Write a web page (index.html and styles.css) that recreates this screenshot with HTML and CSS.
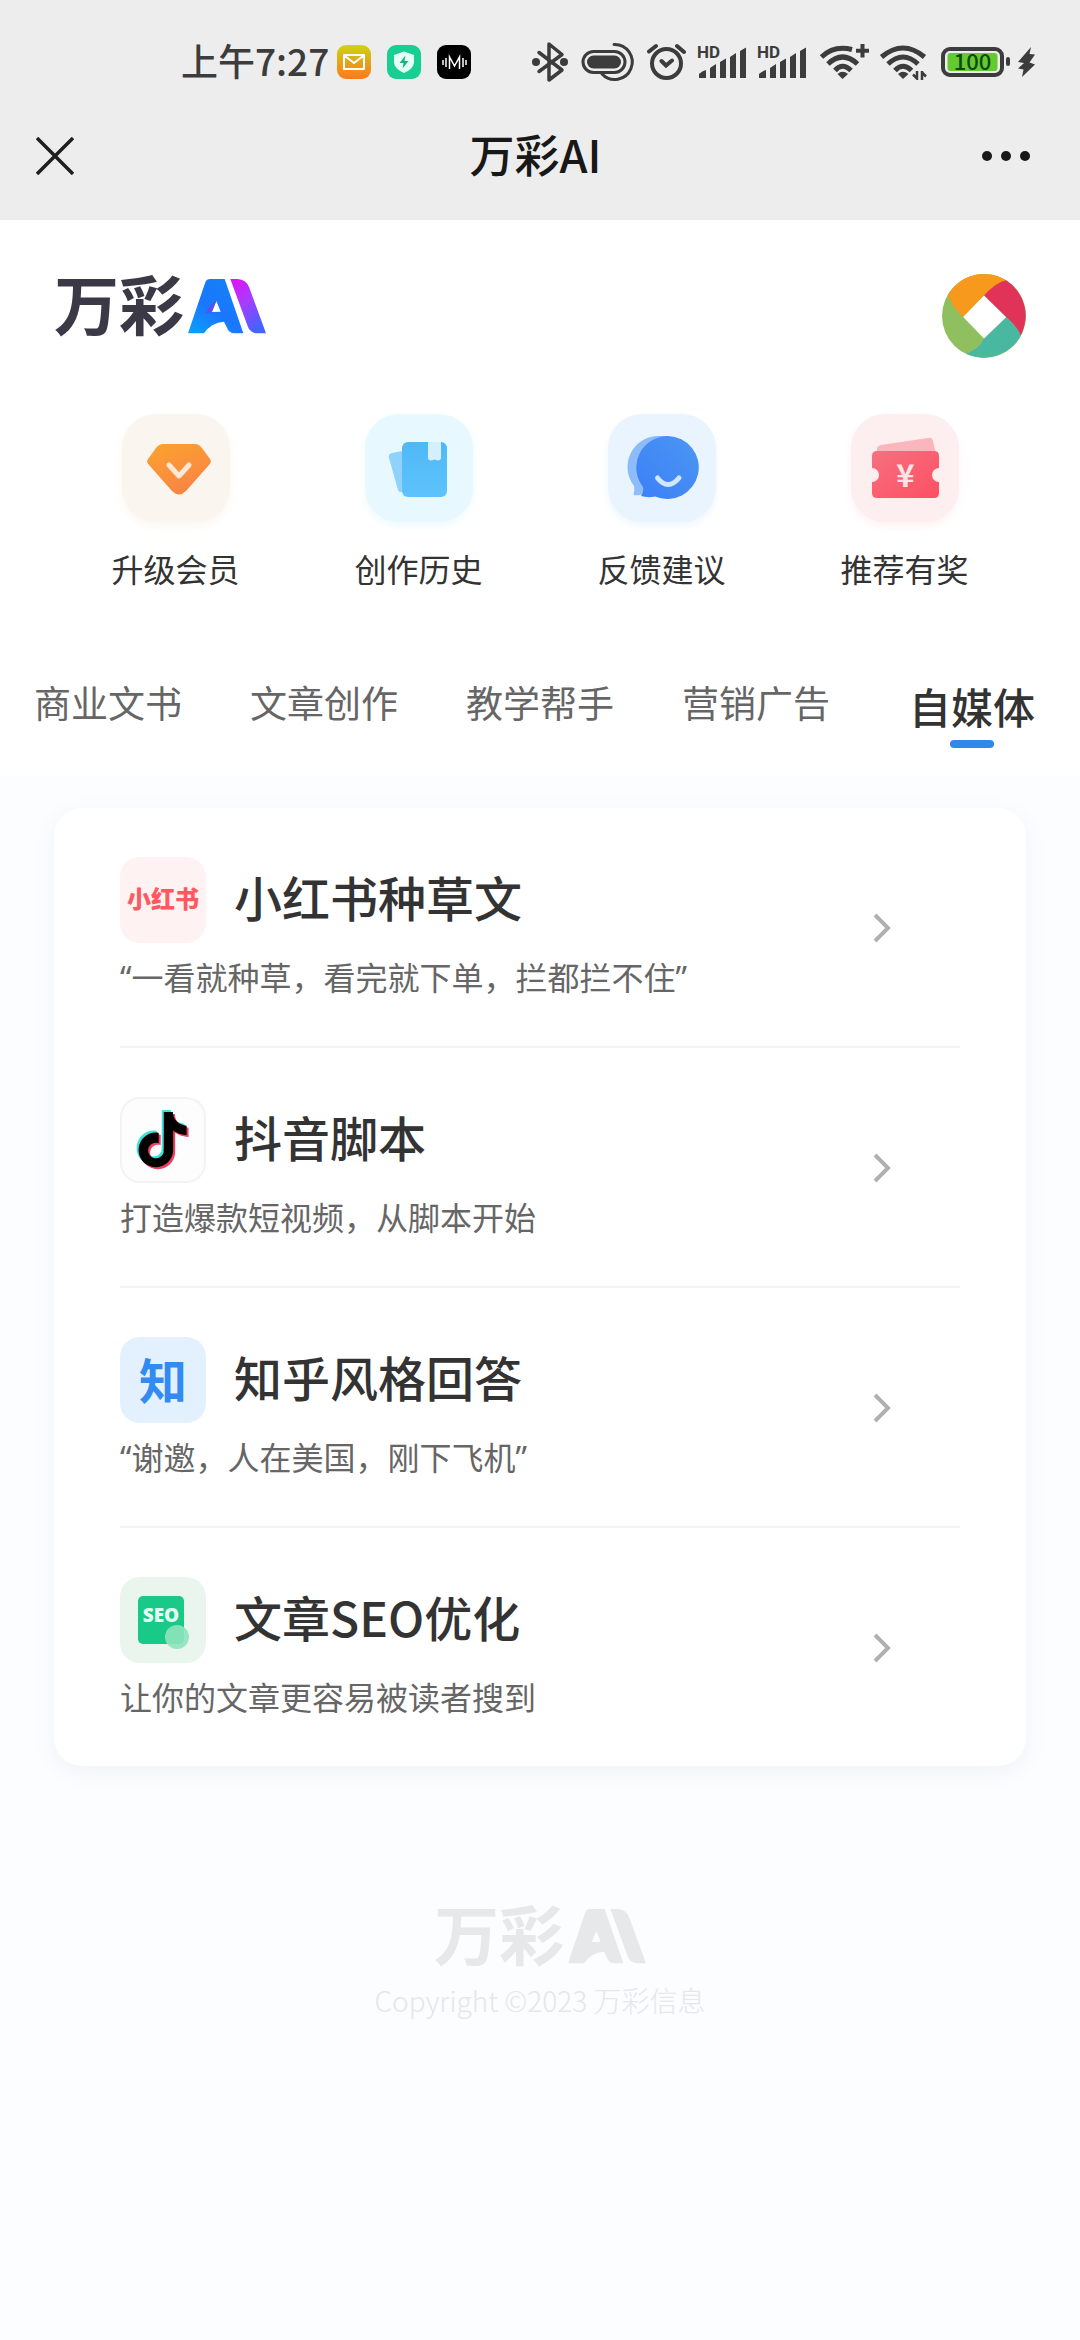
FILE: index.html
```html
<!DOCTYPE html>
<html lang="zh-CN">
<head>
<meta charset="utf-8">
<meta name="viewport" content="width=device-width, initial-scale=1">
<title>万彩AI</title>
<link rel="stylesheet" href="styles.css">
</head>
<body>
<div class="topbar">
  <div class="status">
    <div class="status-group status-left">
      <span class="clock">上午7:27</span>
      <svg class="app-badge" viewBox="0 0 34 34" aria-hidden="true">
        <defs><linearGradient id="mail" x1="0" y1="0" x2="0" y2="1"><stop offset="0" stop-color="#cdd60a"/><stop offset=".5" stop-color="#e3a51c"/><stop offset="1" stop-color="#ff7a1a"/></linearGradient></defs>
        <rect width="34" height="34" rx="9" fill="url(#mail)"/>
        <path d="M7 10H27V24H7ZM8 11L17 18L26 11" fill="none" stroke="#fff" stroke-width="2" stroke-linejoin="round"/>
      </svg>
      <svg class="app-badge" viewBox="0 0 34 34" aria-hidden="true">
        <rect width="34" height="34" rx="9" fill="#18cf93"/>
        <path d="M17 6.5L27 10V18Q26 24 17 28Q8 24 7 18V10Z" fill="#e6fff5"/>
        <path d="M18.5 10.500L12.500 18H16.500L15.500 23.500L21.500 16H17.500Z" fill="#18b283"/>
      </svg>
      <svg class="app-badge" viewBox="0 0 34 34" aria-hidden="true">
        <rect width="34" height="34" rx="9" fill="#000"/>
        <path d="M6 15V20M9 13V22M12.500 24V12L17.500 21L22.500 12V24M26 13V22M29 15V20" fill="none" stroke="#fff" stroke-width="1.500"/>
      </svg>
    </div>
    <div class="status-group status-right">
      <svg width="40" height="44" viewBox="0 0 40 44" aria-hidden="true">
        <path d="M8 12.500L31 30L18 40V4L31 14.500L8 31.500" fill="none" stroke="#3c3c3c" stroke-width="3.500" stroke-linecap="round" stroke-linejoin="round"/>
        <circle cx="5" cy="22" r="4" fill="#3c3c3c"/><circle cx="33" cy="22" r="4" fill="#3c3c3c"/>
      </svg>
      <svg width="56" height="44" viewBox="0 0 56 44" aria-hidden="true">
        <rect x="2" y="11.500" width="42" height="21" rx="10.500" fill="none" stroke="#3c3c3c" stroke-width="3"/>
        <rect x="6" y="15.500" width="34" height="13" rx="6.500" fill="#3c3c3c"/>
        <path d="M33 4.500A17.500 17.500 0 1 1 21 34" fill="none" stroke="#3c3c3c" stroke-width="3" stroke-linecap="round"/>
      </svg>
      <svg width="40" height="44" viewBox="0 0 40 44" fill="none" stroke="#3c3c3c" stroke-width="4" stroke-linecap="round" aria-hidden="true">
        <circle cx="19.500" cy="23.500" r="14.500"/>
        <path d="M14.500 21L19 25.500L25 20.500M2 11.500L9 6M30 6L37 12"/>
      </svg>
      <svg class="signal" width="50" height="44" viewBox="0 0 50 44" aria-hidden="true">
        <text x="0" y="18">HD</text>
        <path d="M2 34Q5 31 9 30V38H2ZM13 28L19 24V38H13ZM23 22L29 18.500V38H23ZM33 17L39 13V38H33ZM43 11L49 7.500V38H43Z"/>
      </svg>
      <svg class="signal" width="50" height="44" viewBox="0 0 50 44" aria-hidden="true">
        <text x="0" y="18">HD</text>
        <path d="M2 34Q5 31 9 30V38H2ZM13 28L19 24V38H13ZM23 22L29 18.500V38H23ZM33 17L39 13V38H33ZM43 11L49 7.500V38H43Z"/>
      </svg>
      <svg width="52" height="44" viewBox="0 0 52 44" fill="none" stroke="#3c3c3c" stroke-width="5" aria-hidden="true">
        <path d="M4.500 17Q17 5 35 9.500M11 24Q25.500 10 40.500 24M18 30.500Q25.500 22 34 30.500"/>
        <path d="M25.500 39L20.500 34Q25.500 29.500 31 34Z" fill="#3c3c3c" stroke="none"/>
        <path d="M45.500 4V17.500M39 10.700H52" stroke-width="4"/>
      </svg>
      <svg width="50" height="44" viewBox="0 0 50 44" fill="none" stroke="#3c3c3c" stroke-width="5" aria-hidden="true">
        <path d="M2.500 17Q24 -1 45.500 17M9 24Q24 10 39 24M16 30.500Q24 22 32.500 30.500"/>
        <path d="M24 39L19 34Q24 29.500 29.500 34Z" fill="#3c3c3c" stroke="none"/>
        <path d="M38 31V40M43 31V40M38.500 39L34 34.500M42.500 32L47 36.500" stroke-width="2.500"/>
      </svg>
      <svg class="battery" width="98" height="44" viewBox="0 0 98 44" role="img" aria-label="电量 100">
        <rect x="4" y="9" width="59" height="26" rx="7" fill="none" stroke="#3c3c3c" stroke-width="4"/>
        <rect x="8.500" y="13" width="50" height="18" rx="3" fill="#63cb2f"/>
        <text x="33.500" y="30">100</text>
        <rect x="67" y="17" width="4" height="9" rx="2" fill="#3c3c3c"/>
        <path d="M92 7L79 22L85 23L79 28.500L84.500 29.500L83 37L96 24.500L90.500 22.500L96 14.500L90.500 14Z" fill="#3c3c3c"/>
      </svg>
    </div>
  </div>
  <header class="nav">
    <button class="nav-button" type="button" aria-label="关闭">
      <svg width="38" height="38" viewBox="0 0 38 38" aria-hidden="true"><path d="M1 1L37 37M37 1L1 37" stroke="#1f1f1f" stroke-width="3.500"/></svg>
    </button>
    <h1 class="nav-title">万彩AI</h1>
    <button class="nav-button nav-more" type="button" aria-label="更多">
      <svg width="50" height="38" viewBox="0 0 50 38" fill="#181818" aria-hidden="true"><circle cx="6" cy="19" r="5"/><circle cx="25" cy="19" r="5"/><circle cx="44" cy="19" r="5"/></svg>
    </button>
  </header>
</div>

<main>
  <section class="hero">
    <div class="brand-row">
      <div class="brand">
        <span class="brand-name">万彩</span>
        <svg class="brand-mark" viewBox="0 0 234 165" role="img" aria-label="AI">
          <defs>
            <linearGradient id="markBlue" x1="0" y1="1" x2=".7" y2="0"><stop offset="0" stop-color="#0aa4f5"/><stop offset=".5" stop-color="#1a76ff"/><stop offset="1" stop-color="#1480f5"/></linearGradient>
            <linearGradient id="markPink" x1="0" y1="0" x2=".6" y2="1"><stop offset="0" stop-color="#e310f7"/><stop offset=".5" stop-color="#a83cff"/><stop offset="1" stop-color="#4563ff"/></linearGradient>
          </defs>
          <path d="M0 163L52 10Q56 0 66 0H110L166 163H140Q122 162 117 146L108 128Q70 130 48 163ZM71 99L98 98L85 66Z" fill="url(#markBlue)" fill-rule="evenodd"/>
          <path d="M52 105Q66 75 85 66L72 99Z" fill="#5b50ea"/>
          <path d="M127 0H148Q176 2 184 26L234 163H208Q186 162 179 142Z" fill="url(#markPink)"/>
        </svg>
      </div>
      <button class="avatar" type="button" aria-label="个人中心">
        <svg viewBox="123 72 254 254" aria-hidden="true">
          <circle cx="250" cy="199" r="127" fill="#90bf5f"/>
          <path d="M140 136A127 127 0 0 1 317 91L290 105L250 137L187 202Q160 180 140 136Z" fill="#f6991d"/>
          <path d="M250 137Q285 98 317 91A127 127 0 0 1 361 258Q346 226 317 203Z" fill="#e03357"/>
          <path d="M317 203Q350 230 361 258A127 127 0 0 1 196 313Q240 295 250 267Z" fill="#48b8a0"/>
          <path d="M250 137L317 203L250 267L187 202Z" fill="#fff"/>
        </svg>
      </button>
    </div>

    <nav class="shortcuts" aria-label="快捷入口">
      <a class="shortcut" href="#vip">
        <svg class="shortcut-icon shortcut-vip" viewBox="0 0 108 108" aria-hidden="true">
          <defs><linearGradient id="gem" x1="0" y1="0" x2=".5" y2="1"><stop offset="0" stop-color="#fba32e"/><stop offset="1" stop-color="#f98544"/></linearGradient></defs>
          <path d="M41 30H73Q77 30 80 34L88 45Q90 48 87 51L64 77Q57 84 50 77L27 51Q24 48 26 45L34 34Q37 30 41 30Z" fill="url(#gem)"/>
          <path d="M47 51L57 62L67 51" fill="none" stroke="#ffe8d8" stroke-width="5" stroke-linecap="round" stroke-linejoin="round"/>
        </svg>
        <span>升级会员</span>
      </a>
      <a class="shortcut" href="#history">
        <svg class="shortcut-icon shortcut-history" viewBox="0 0 108 108" aria-hidden="true">
          <defs><linearGradient id="book" x1="0" y1="0" x2="0" y2="1"><stop offset="0" stop-color="#4fb8f5"/><stop offset="1" stop-color="#5ec3fc"/></linearGradient></defs>
          <path d="M37 37L27 39Q23 40 24 44L33 76Q34 79 40 78Z" fill="#8fd2fb"/>
          <rect x="37" y="28" width="45" height="55" rx="6" fill="url(#book)"/>
          <path d="M63 28H76V44Q76 48 69.500 45.500Q63 48 63 44Z" fill="#d6effd"/>
        </svg>
        <span>创作历史</span>
      </a>
      <a class="shortcut" href="#feedback">
        <svg class="shortcut-icon shortcut-feedback" viewBox="0 0 108 108" aria-hidden="true">
          <defs><linearGradient id="chat" x1="1" y1="0" x2="0" y2="1"><stop offset="0" stop-color="#4b97f2"/><stop offset="1" stop-color="#3c7ff8"/></linearGradient></defs>
          <path d="M52 22A31 31 0 0 0 26 72Q27 76 25.500 81Q31 82 35 80L60 80V22Z" fill="#8dbcf8"/>
          <path d="M60 22A31.500 31.500 0 1 1 47 82.500Q40 84 33 82Q36 78 35 73A31.500 31.500 0 0 1 60 22Z" fill="url(#chat)"/>
          <path d="M49.500 64Q60 77 71 64" fill="none" stroke="#d3e6ff" stroke-width="5" stroke-linecap="round"/>
        </svg>
        <span>反馈建议</span>
      </a>
      <a class="shortcut" href="#invite">
        <svg class="shortcut-icon shortcut-invite" viewBox="0 0 108 108" aria-hidden="true">
          <defs><linearGradient id="ticket" x1="0" y1="0" x2="1" y2="1"><stop offset="0" stop-color="#f5707f"/><stop offset="1" stop-color="#ff4f63"/></linearGradient></defs>
          <path d="M26 40V35Q26 32 30 31L77 24Q81 23 82 27L85 40Z" fill="#fbb5bc"/>
          <path d="M26 37H83Q88 37 88 42V54A7 7 0 0 0 88 68V79Q88 84 83 84H26Q21 84 21 79V68A7 7 0 0 0 21 54V42Q21 37 26 37Z" fill="url(#ticket)"/>
          <text x="54.500" y="73">¥</text>
        </svg>
        <span>推荐有奖</span>
      </a>
    </nav>

    <nav class="tabs" aria-label="分类">
      <a class="tab" href="#business">商业文书</a>
      <a class="tab" href="#article">文章创作</a>
      <a class="tab" href="#teaching">教学帮手</a>
      <a class="tab" href="#marketing">营销广告</a>
      <a class="tab tab-active" href="#media" aria-current="page">自媒体</a>
    </nav>
  </section>

  <section class="card" id="media">
    <a class="item" href="#xiaohongshu">
      <div class="item-body">
        <div class="item-head">
          <span class="item-icon icon-xhs" aria-hidden="true">小红书</span>
          <h2 class="item-title">小红书种草文</h2>
        </div>
        <p class="item-desc">“一看就种草，看完就下单，拦都拦不住”</p>
      </div>
      <svg class="chevron" viewBox="0 0 20 32" aria-hidden="true"><path d="M3 3L16 16L3 29"/></svg>
    </a>
    <a class="item" href="#douyin">
      <div class="item-body">
        <div class="item-head">
          <span class="item-icon icon-douyin">
            <svg viewBox="0 0 86 86" aria-hidden="true">
              <defs><path id="note" d="M12.525.02c1.310-.02 2.610-.01 3.910-.02.08 1.530.63 3.090 1.750 4.170 1.120 1.110 2.700 1.620 4.240 1.790v4.030c-1.440-.05-2.890-.35-4.200-.97-.57-.26-1.100-.59-1.620-.93-.01 2.920.01 5.840-.02 8.750-.08 1.400-.54 2.790-1.350 3.940-1.310 1.920-3.580 3.170-5.910 3.210-1.430.08-2.860-.31-4.080-1.030-2.020-1.190-3.440-3.370-3.650-5.710-.02-.5-.03-1-.01-1.490.18-1.900 1.120-3.720 2.580-4.960 1.660-1.440 3.980-2.130 6.150-1.720.02 1.480-.04 2.960-.04 4.440-.99-.32-2.150-.23-3.020.37-.63.41-1.110 1.040-1.360 1.750-.21.51-.15 1.070-.14 1.610.24 1.640 1.820 3.020 3.500 2.870 1.120-.01 2.190-.66 2.770-1.610.19-.33.4-.67.41-1.060.1-1.790.06-3.570.07-5.360.01-4.030-.01-8.050.02-12.070z"/></defs>
              <use href="#note" transform="translate(13 13) scale(2.300)" fill="#3fe0dc"/>
              <use href="#note" transform="translate(17 17) scale(2.300)" fill="#f03e63"/>
              <use href="#note" transform="translate(15 15) scale(2.300)" fill="#000"/>
            </svg>
          </span>
          <h2 class="item-title">抖音脚本</h2>
        </div>
        <p class="item-desc">打造爆款短视频，从脚本开始</p>
      </div>
      <svg class="chevron" viewBox="0 0 20 32" aria-hidden="true"><path d="M3 3L16 16L3 29"/></svg>
    </a>
    <a class="item" href="#zhihu">
      <div class="item-body">
        <div class="item-head">
          <span class="item-icon icon-zhihu" aria-hidden="true">知</span>
          <h2 class="item-title">知乎风格回答</h2>
        </div>
        <p class="item-desc">“谢邀，人在美国，刚下飞机”</p>
      </div>
      <svg class="chevron" viewBox="0 0 20 32" aria-hidden="true"><path d="M3 3L16 16L3 29"/></svg>
    </a>
    <a class="item" href="#seo">
      <div class="item-body">
        <div class="item-head">
          <span class="item-icon icon-seo">
            <svg viewBox="0 0 86 86" aria-hidden="true">
              <rect x="18" y="19" width="46" height="48" rx="5" fill="#18c987"/>
              <text x="41" y="45">SEO</text>
              <circle cx="57" cy="60" r="12" fill="#8fe3be" fill-opacity=".9"/>
            </svg>
          </span>
          <h2 class="item-title">文章SEO优化</h2>
        </div>
        <p class="item-desc">让你的文章更容易被读者搜到</p>
      </div>
      <svg class="chevron" viewBox="0 0 20 32" aria-hidden="true"><path d="M3 3L16 16L3 29"/></svg>
    </a>
  </section>
</main>

<footer class="footer">
  <div class="brand brand-muted">
    <span class="brand-name">万彩</span>
    <svg class="brand-mark" viewBox="0 0 234 165" fill="#e7e8ea" role="img" aria-label="AI">
      <path d="M0 163L52 10Q56 0 66 0H110L166 163H140Q122 162 117 146L108 128Q70 130 48 163ZM71 99L98 98L85 66Z" fill-rule="evenodd"/>
      <path d="M127 0H148Q176 2 184 26L234 163H208Q186 162 179 142Z"/>
    </svg>
  </div>
  <p class="copyright">Copyright ©2023 万彩信息</p>
</footer>
</body>
</html>
```

FILE: styles.css
```css
* {
  box-sizing: border-box;
  margin: 0;
  padding: 0;
}

body {
  background: #fbfdff;
  color: #333;
  font-family: "Noto Sans CJK SC", sans-serif;
  font-size: 32px;
  line-height: 48px;
}

a {
  color: inherit;
  text-decoration: none;
}

button {
  border: 0;
  background: none;
  font: inherit;
}

svg {
  display: block;
  flex: none;
}

/* System status bar and page title */
.topbar {
  background: #ededed;
}

.status {
  display: flex;
  align-items: center;
  justify-content: space-between;
  padding: 32px 43px 0 181px;
}

.status-group {
  display: flex;
  align-items: center;
  height: 60px;
}

.status-left {
  gap: 16px;
}

.status-right {
  gap: 10px;
}

.clock {
  margin-right: -8px;
  padding-bottom: 4px;
  color: #3c3c3c;
  font-size: 37px;
  font-weight: 500;
}

.app-badge {
  width: 34px;
  height: 34px;
}

.signal {
  fill: #3c3c3c;
  font-family: Roboto, sans-serif;
  font-size: 17px;
  font-weight: 700;
}

.battery text {
  fill: #0e4a0a;
  font-size: 22px;
  font-weight: 500;
  text-anchor: middle;
}

.nav {
  display: grid;
  grid-template-columns: 1fr auto 1fr;
  align-items: center;
  height: 128px;
  padding: 0 49px 0 36px;
}

.nav-more {
  justify-self: end;
}

.nav-title {
  padding: 0 0 4px 4px;
  color: #181818;
  font-size: 45px;
  font-weight: 500;
  line-height: 64px;
}

/* Brand, shortcuts and category tabs */
.hero {
  padding-top: 54px;
  background: #fff;
}

.brand-row {
  display: flex;
  align-items: flex-start;
  justify-content: space-between;
  padding: 0 54px;
}

.brand {
  display: flex;
  align-items: flex-start;
  gap: 4px;
}

.brand-name {
  color: #3a3945;
  font-size: 65px;
  font-weight: 700;
  line-height: 56px;
}

.brand-mark {
  width: 78px;
  height: 55px;
  margin-top: 5px;
}

.avatar,
.avatar svg {
  width: 84px;
  height: 84px;
}

.shortcuts {
  display: grid;
  grid-template-columns: repeat(4, 1fr);
  padding: 56px 54px 0;
}

.shortcut {
  display: flex;
  flex-direction: column;
  align-items: center;
  gap: 24px;
  line-height: 44px;
}

.shortcut-icon {
  width: 108px;
  height: 108px;
  border-radius: 34px;
}

.shortcut-vip {
  background: #fbf5ef;
  box-shadow: 0 4px 8px #fdf6ef;
}

.shortcut-history {
  background: #e8f8ff;
  box-shadow: 0 4px 8px #edfaff;
}

.shortcut-feedback {
  background: #eaf4fe;
  box-shadow: 0 4px 8px #eff7ff;
}

.shortcut-invite {
  background: #fdeef0;
  box-shadow: 0 4px 8px #fff1f3;
}

.shortcut-invite text {
  fill: #ffe3e6;
  font-size: 31px;
  font-weight: 700;
  text-anchor: middle;
}

.tabs {
  display: grid;
  grid-template-columns: repeat(5, 1fr);
  align-items: start;
  padding: 84px 0 28px;
}

.tab {
  color: #666;
  font-size: 37px;
  line-height: 56px;
  text-align: center;
}

.tab-active {
  color: #333;
  font-size: 42px;
  font-weight: 500;
  line-height: 64px;
}

.tab-active::after {
  content: "";
  display: block;
  width: 44px;
  height: 8px;
  margin: 2px auto 0;
  border-radius: 4px;
  background: #2f88ea;
}

/* Template list */
.card {
  margin: 32px 54px 0;
  padding: 0 66px;
  border-radius: 28px;
  background: #fff;
  box-shadow: 0 6px 24px rgba(40, 50, 70, 0.05);
}

.item {
  display: flex;
  align-items: center;
  justify-content: space-between;
  padding: 49px 68px 44px 0;
}

.item + .item {
  border-top: 2px solid #f3f3f5;
}

.item-body {
  display: grid;
  gap: 11px;
}

.item-head {
  display: flex;
  align-items: center;
  gap: 28px;
}

.item-icon {
  display: flex;
  align-items: center;
  justify-content: center;
  width: 86px;
  height: 86px;
  border-radius: 20px;
  line-height: 1;
}

.item-icon svg {
  width: 86px;
  height: 86px;
}

.icon-xhs {
  padding-bottom: 4px;
  background: #fff2f2;
  color: #ff5860;
  font-size: 24px;
  font-weight: 900;
}

.icon-douyin {
  background: #fdfdfd;
  box-shadow: inset 0 0 0 2px #f3f3f3;
}

.icon-zhihu {
  padding-bottom: 4px;
  background: #e3f1ff;
  color: #338af0;
  font-size: 48px;
  font-weight: 700;
}

.icon-seo {
  background: #eaf6ed;
}

.icon-seo text {
  fill: #e3fff3;
  font-family: "Open Sans", sans-serif;
  font-size: 19px;
  font-weight: 800;
  text-anchor: middle;
}

.item-title {
  padding-bottom: 8px;
  font-size: 48px;
  font-weight: 500;
  line-height: 64px;
}

.item-desc {
  color: #666;
  font-family: "Noto Sans", "Noto Sans CJK SC", sans-serif;
}

.chevron {
  width: 20px;
  height: 32px;
  margin-bottom: 4px;
  fill: none;
  stroke: #b0b0b0;
  stroke-width: 4;
}

/* Footer */
.footer {
  display: flex;
  flex-direction: column;
  align-items: center;
  gap: 16px;
  padding: 138px 54px;
}

.brand-muted .brand-name {
  color: #e7e8ea;
}

.copyright {
  color: #e6e7e9;
  font-size: 28px;
  font-weight: 300;
  line-height: 40px;
}
```
